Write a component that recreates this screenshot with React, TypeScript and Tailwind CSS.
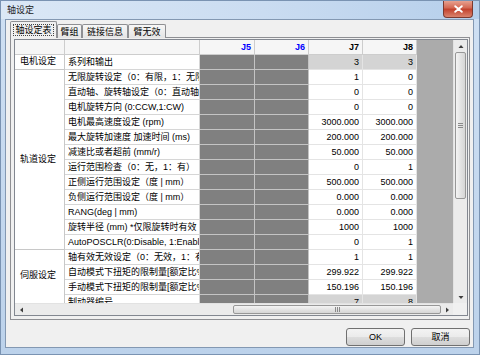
import React from "react";

type Row = { name: string; j7: string; j8: string; ro?: boolean };

const rows: Row[] = [
  { name: "系列和输出", j7: "3", j8: "3", ro: true },
  { name: "无限旋转设定（0：有限，1：无限）", j7: "1", j8: "0" },
  { name: "直动轴、旋转轴设定（0：直动轴，1：旋转轴）", j7: "0", j8: "0" },
  { name: "电机旋转方向 (0:CCW,1:CW)", j7: "0", j8: "0" },
  { name: "电机最高速度设定 (rpm)", j7: "3000.000", j8: "3000.000" },
  { name: "最大旋转加速度 加速时间 (ms)", j7: "200.000", j8: "200.000" },
  { name: "减速比或者超前 (mm/r)", j7: "50.000", j8: "50.000" },
  { name: "运行范围检查（0：无，1：有）", j7: "0", j8: "1" },
  { name: "正侧运行范围设定（度 | mm）", j7: "500.000", j8: "500.000" },
  { name: "负侧运行范围设定（度 | mm）", j7: "0.000", j8: "0.000" },
  { name: "RANG(deg | mm)", j7: "0.000", j8: "0.000" },
  { name: "旋转半径 (mm) *仅限旋转时有效", j7: "1000", j8: "1000" },
  { name: "AutoPOSCLR(0:Disable, 1:Enable)", j7: "0", j8: "1" },
  { name: "轴有效无效设定（0：无效，1：有效）", j7: "1", j8: "1" },
  { name: "自动模式下扭矩的限制量[额定比%]", j7: "299.922", j8: "299.922" },
  { name: "手动模式下扭矩的限制量[额定比%]", j7: "150.196", j8: "150.196" },
  { name: "制动器编号", j7: "7", j8: "8", ro: true },
];

const hdr =
  "bg-[#f6f6f6] border-r border-b border-[#cdcdcd] text-right pr-[3px] font-bold leading-[14px]";
const catCls =
  "bg-white border-r border-b border-[#c8c8c8] flex items-center pl-[5px] whitespace-nowrap overflow-hidden";
const nameCls =
  "bg-white border-r border-b border-[#d6d6d6] pl-[3px] leading-[14px] whitespace-nowrap overflow-hidden";
const darkCls = "bg-[#808080] border-r border-b border-[#c4c4c4]";
const valCls =
  "border-r border-b border-[#e4e4e4] text-right pr-[3px] leading-[14px] whitespace-nowrap overflow-hidden";

function Tri({ dir }: { dir: "up" | "down" | "left" | "right" }) {
  const d =
    dir === "up"
      ? "M0.5 4L3 1L5.5 4Z"
      : dir === "down"
      ? "M0.5 1L3 4L5.5 1Z"
      : dir === "left"
      ? "M4 0.5L1 3L4 5.5Z"
      : "M1 0.5L4 3L1 5.5Z";
  const w = dir === "up" || dir === "down" ? 6 : 5;
  const h = dir === "up" || dir === "down" ? 5 : 6;
  return (
    <svg width={w} height={h} viewBox={`0 0 ${w} ${h}`}>
      <path d={d} fill="#3f3f3f" />
    </svg>
  );
}

function Tab({ w, children }: { w: string; children: React.ReactNode }) {
  return (
    <div
      className={`${w} mt-[3px] h-[14px] border border-b-0 border-[#8e8f93] bg-[linear-gradient(180deg,#f7f7f7,#e4e4e4)] rounded-t-[2px] flex items-center justify-center leading-[10px] whitespace-nowrap`}
    >
      {children}
    </div>
  );
}

export default function App() {
  return (
    <div className="w-[480px] h-[355px] overflow-hidden border border-[#7a93b2] bg-[linear-gradient(180deg,#cfe0f3,#bcd2eb)] flex flex-col font-[family-name:'Liberation_Sans','Noto_Sans_CJK_SC',sans-serif] text-[9px] text-black">
      {/* title bar */}
      <div className="h-[18px] shrink-0 flex items-start bg-[linear-gradient(90deg,#dbe8f6,#cadcf1_55%,#b6cfeb)]">
        <span className="pl-[6px] pt-[4px] leading-[10px] text-[#1c1c1c]">轴设定</span>
        <div className="ml-auto mr-[6px] -mt-px w-[30px] h-[18px] rounded-b-[4px] border border-t-0 border-[#7b3a30] bg-[linear-gradient(180deg,#eaa998,#d46a55_45%,#c3432e_55%,#da836d)] flex items-center justify-center">
          <svg width="9" height="8" viewBox="0 0 9 8">
            <path d="M1.2 1.2L7.8 6.8M7.8 1.2L1.2 6.8" stroke="white" strokeWidth="1.8" strokeLinecap="round" />
          </svg>
        </div>
      </div>

      {/* client */}
      <div className="ml-[4px] w-[469px] h-[329px] shrink-0 border border-[#8398b2] bg-[#f0f0f0] flex flex-col pt-px pl-[4px] pr-[3px]">
        {/* tabs */}
        <div className="h-[17px] shrink-0 flex items-start relative z-10">
          <div className="w-[47px] h-[17px] border border-b-0 border-[#8e8f93] bg-[#f0f0f0] rounded-t-[2px] flex items-center justify-center">
            <span className="border border-dotted border-[#444] px-[1px] leading-[10px] whitespace-nowrap">轴设定表</span>
          </div>
          <Tab w="w-[25px]">臂组</Tab>
          <Tab w="w-[46px]">链接信息</Tab>
          <Tab w="w-[38px]">臂无效</Tab>
        </div>

        {/* tab panel */}
        <div className="-mt-px w-[460px] h-[283px] shrink-0 border border-[#8e8f93] bg-[#f0f0f0] pl-[3px] pt-px">
          <div className="w-[454px] h-[277px] border border-[#828790] flex flex-col bg-white">
            <div className="h-[263px] flex">
              {/* viewport */}
              <div className="w-[438px] h-[263px] overflow-hidden bg-[#ababab]">
                <div className="grid grid-cols-[50px_135px_55px_54px_54px_54px] auto-rows-[15px] w-[402px]">
                  <div className={hdr}></div>
                  <div className={hdr}></div>
                  <div className={`${hdr} text-[#0000ff]`}>J5</div>
                  <div className={`${hdr} text-[#0000ff]`}>J6</div>
                  <div className={hdr}>J7</div>
                  <div className={hdr}>J8</div>
                  {rows.map((r, i) => (
                    <React.Fragment key={i}>
                      {i === 0 && <div className={`${catCls} row-span-1`}>电机设定</div>}
                      {i === 1 && <div className={`${catCls} row-span-12`}>轨道设定</div>}
                      {i === 13 && <div className={`${catCls} row-span-4 pb-[7px]`}>伺服设定</div>}
                      <div className={nameCls}>{r.name}</div>
                      <div className={darkCls}></div>
                      <div className={darkCls}></div>
                      <div className={`${valCls} ${r.ro ? "bg-[#d4d4d4]" : "bg-white"}`}>{r.j7}</div>
                      <div className={`${valCls} ${r.ro ? "bg-[#d4d4d4]" : "bg-white"}`}>{r.j8}</div>
                    </React.Fragment>
                  ))}
                </div>
              </div>
              {/* vertical scrollbar */}
              <div className="w-[14px] h-[263px] bg-[#ebebeb] border-l border-[#e2e2e2] flex flex-col">
                <div className="h-[12px] flex items-center justify-center">
                  <Tri dir="up" />
                </div>
                <div className="h-[147px] mx-[1px] rounded-[2px] border border-[#979797] bg-[linear-gradient(90deg,#f4f4f4,#e2e2e2_55%,#d6d6d6)] flex flex-col items-center justify-center gap-[1px]">
                  <div className="w-[5px] h-px bg-[#8a8a8a]" />
                  <div className="w-[5px] h-px bg-[#8a8a8a]" />
                  <div className="w-[5px] h-px bg-[#8a8a8a]" />
                </div>
                <div className="flex-1" />
                <div className="h-[12px] flex items-center justify-center">
                  <Tri dir="down" />
                </div>
              </div>
            </div>
            <div className="h-[12px] flex">
              {/* horizontal scrollbar */}
              <div className="w-[438px] h-[12px] bg-[#ebebeb] border-t border-[#e2e2e2] flex">
                <div className="w-[12px] flex items-center justify-center">
                  <Tri dir="left" />
                </div>
                <div className="flex-1" />
                <div className="w-[208px] my-[1px] rounded-[2px] border border-[#979797] bg-[linear-gradient(180deg,#f4f4f4,#e2e2e2_55%,#d6d6d6)] flex items-center justify-center gap-[1px]">
                  <div className="h-[5px] w-px bg-[#8a8a8a]" />
                  <div className="h-[5px] w-px bg-[#8a8a8a]" />
                  <div className="h-[5px] w-px bg-[#8a8a8a]" />
                </div>
                <div className="w-[12px] flex items-center justify-center">
                  <Tri dir="right" />
                </div>
              </div>
              <div className="w-[14px] h-[12px] bg-[#f0f0f0]" />
            </div>
          </div>
        </div>

        {/* buttons */}
        <div className="mt-[8px] flex justify-end gap-[6px]">
          <button className="w-[59px] h-[18px] rounded-[3px] border border-[#707070] bg-[linear-gradient(180deg,#f3f3f3,#ebebeb_48%,#dddddd_52%,#cfcfcf)] text-[9px] leading-[10px] text-black">
            OK
          </button>
          <button className="w-[59px] h-[18px] rounded-[3px] border border-[#707070] bg-[linear-gradient(180deg,#f3f3f3,#ebebeb_48%,#dddddd_52%,#cfcfcf)] text-[9px] leading-[10px] text-black">
            取消
          </button>
        </div>
      </div>
    </div>
  );
}
